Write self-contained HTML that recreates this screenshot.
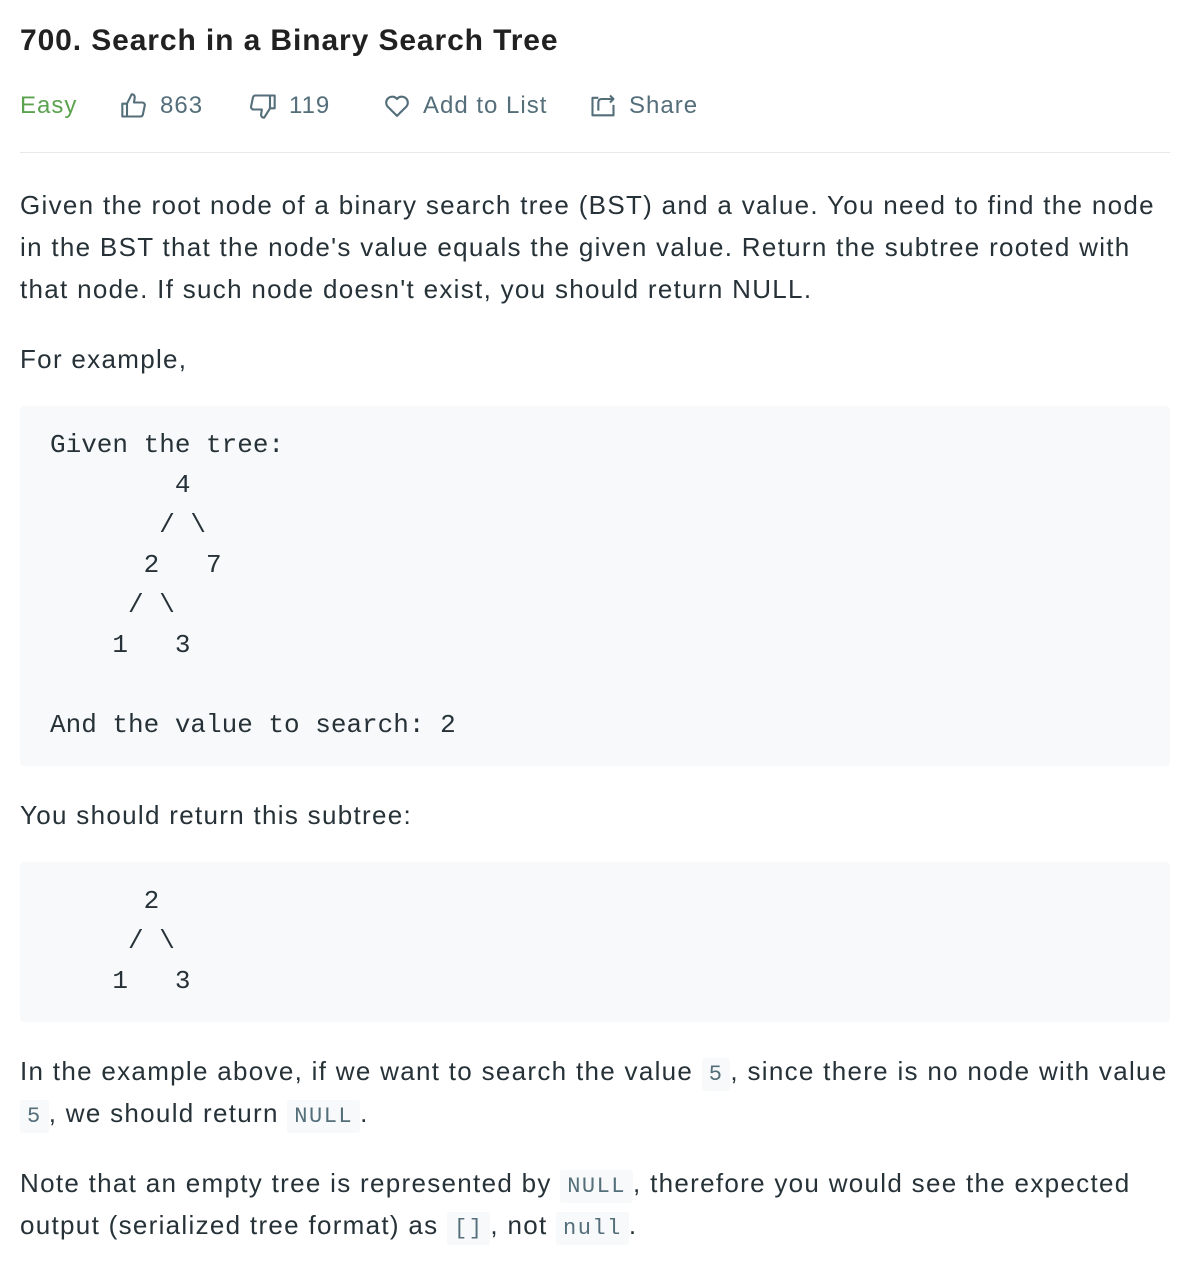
<!DOCTYPE html>
<html><head><meta charset="utf-8"><style>
body{margin:0;width:1192px;height:1262px;background:#fff;position:relative;font-family:"Liberation Sans",sans-serif;color:#263238;overflow:hidden}
.l{position:absolute;left:20px;white-space:nowrap;font-size:26px;height:42px;line-height:42px;letter-spacing:1.3px}
.c{position:absolute;left:50px;white-space:pre;font-family:"Liberation Mono",monospace;font-size:26px;line-height:40px;height:40px;color:#263238}
.blk{position:absolute;left:20px;width:1150px;background:#f7f9fa;border-radius:4px}
code{font-family:"Liberation Mono",monospace;font-size:22px;background:#f7f9fa;color:#546e7a;padding:4px 7px;border-radius:3px;letter-spacing:1.5px}
.meta{position:absolute;top:88px;font-size:24px;line-height:36px;color:#546e7a;white-space:nowrap;display:flex;align-items:center;letter-spacing:1px}
.meta svg{margin-right:12px}
</style></head><body>
<div style="position:absolute;left:20px;top:20px;font-size:30px;font-weight:bold;line-height:42px;color:#212121;letter-spacing:0.9px">700. Search in a Binary Search Tree</div>
<div class="meta" style="left:20px;color:#5ca34f">Easy</div>
<div class="meta" style="left:120px"><svg width="28" height="28" viewBox="0 0 24 24" fill="none" stroke="#546e7a" stroke-width="1.8" stroke-linejoin="round"><path d="M2 10h4v11H2z"/><path d="M6 10l4-8c2 0 3 1.5 2.5 3.5L12 9h7c1.5 0 2.5 1.3 2.2 2.7l-1.6 7.6c-.3 1-1.1 1.7-2.1 1.7H6"/></svg>863</div>
<div class="meta" style="left:249px"><svg width="28" height="28" viewBox="0 0 24 24" fill="none" stroke="#546e7a" stroke-width="1.8" stroke-linejoin="round"><path d="M18 3h4v11h-4z"/><path d="M18 14l-5 8c-2 0-3-1.5-2.5-3.5L11 15H4c-1.5 0-2.5-1.3-2.2-2.7L3.4 4.7C3.7 3.7 4.5 3 5.5 3H18"/></svg>119</div>
<div class="meta" style="left:383px"><svg width="28" height="28" viewBox="0 0 24 24" fill="none" stroke="#546e7a" stroke-width="1.8" stroke-linejoin="round"><path d="M12 20.5L3.8 12.3A5 5 0 0 1 12 6a5 5 0 0 1 8.2 6.3z"/></svg>Add to List</div>
<div class="meta" style="left:589px"><svg width="28" height="28" viewBox="0 0 24 24" fill="none" stroke="#546e7a" stroke-width="1.8" stroke-linejoin="round"><path d="M8 5H3v15h18v-9"/><path d="M8 16v-7c0-2 1-3 3-3h10"/><path d="M18 3l3 3-3 3"/></svg>Share</div>
<div style="position:absolute;left:20px;top:152px;width:1150px;height:1px;background:#e8e8e8"></div>

<div class="l" style="top:184px">Given the root node of a binary search tree (BST) and a value. You need to find the node</div>
<div class="l" style="top:226px">in the BST that the node's value equals the given value. Return the subtree rooted with</div>
<div class="l" style="top:268px">that node. If such node doesn't exist, you should return NULL.</div>
<div class="l" style="top:338px">For example,</div>

<div class="blk" style="top:406px;height:360px"></div>
<div class="c" style="top:425px">Given the tree:</div>
<div class="c" style="top:465px">        4</div>
<div class="c" style="top:505px">       / \</div>
<div class="c" style="top:545px">      2   7</div>
<div class="c" style="top:585px">     / \</div>
<div class="c" style="top:625px">    1   3</div>
<div class="c" style="top:705px">And the value to search: 2</div>

<div class="l" style="top:794px">You should return this subtree:</div>

<div class="blk" style="top:862px;height:160px"></div>
<div class="c" style="top:881px">      2</div>
<div class="c" style="top:921px">     / \</div>
<div class="c" style="top:961px">    1   3</div>

<div class="l" style="top:1050px">In the example above, if we want to search the value <code>5</code>, since there is no node with value</div>
<div class="l" style="top:1092px;left:20px"><code>5</code>, we should return <code>NULL</code>.</div>
<div class="l" style="top:1162px">Note that an empty tree is represented by <code>NULL</code>, therefore you would see the expected</div>
<div class="l" style="top:1204px">output (serialized tree format) as <code>[]</code>, not <code>null</code>.</div>
</body></html>
